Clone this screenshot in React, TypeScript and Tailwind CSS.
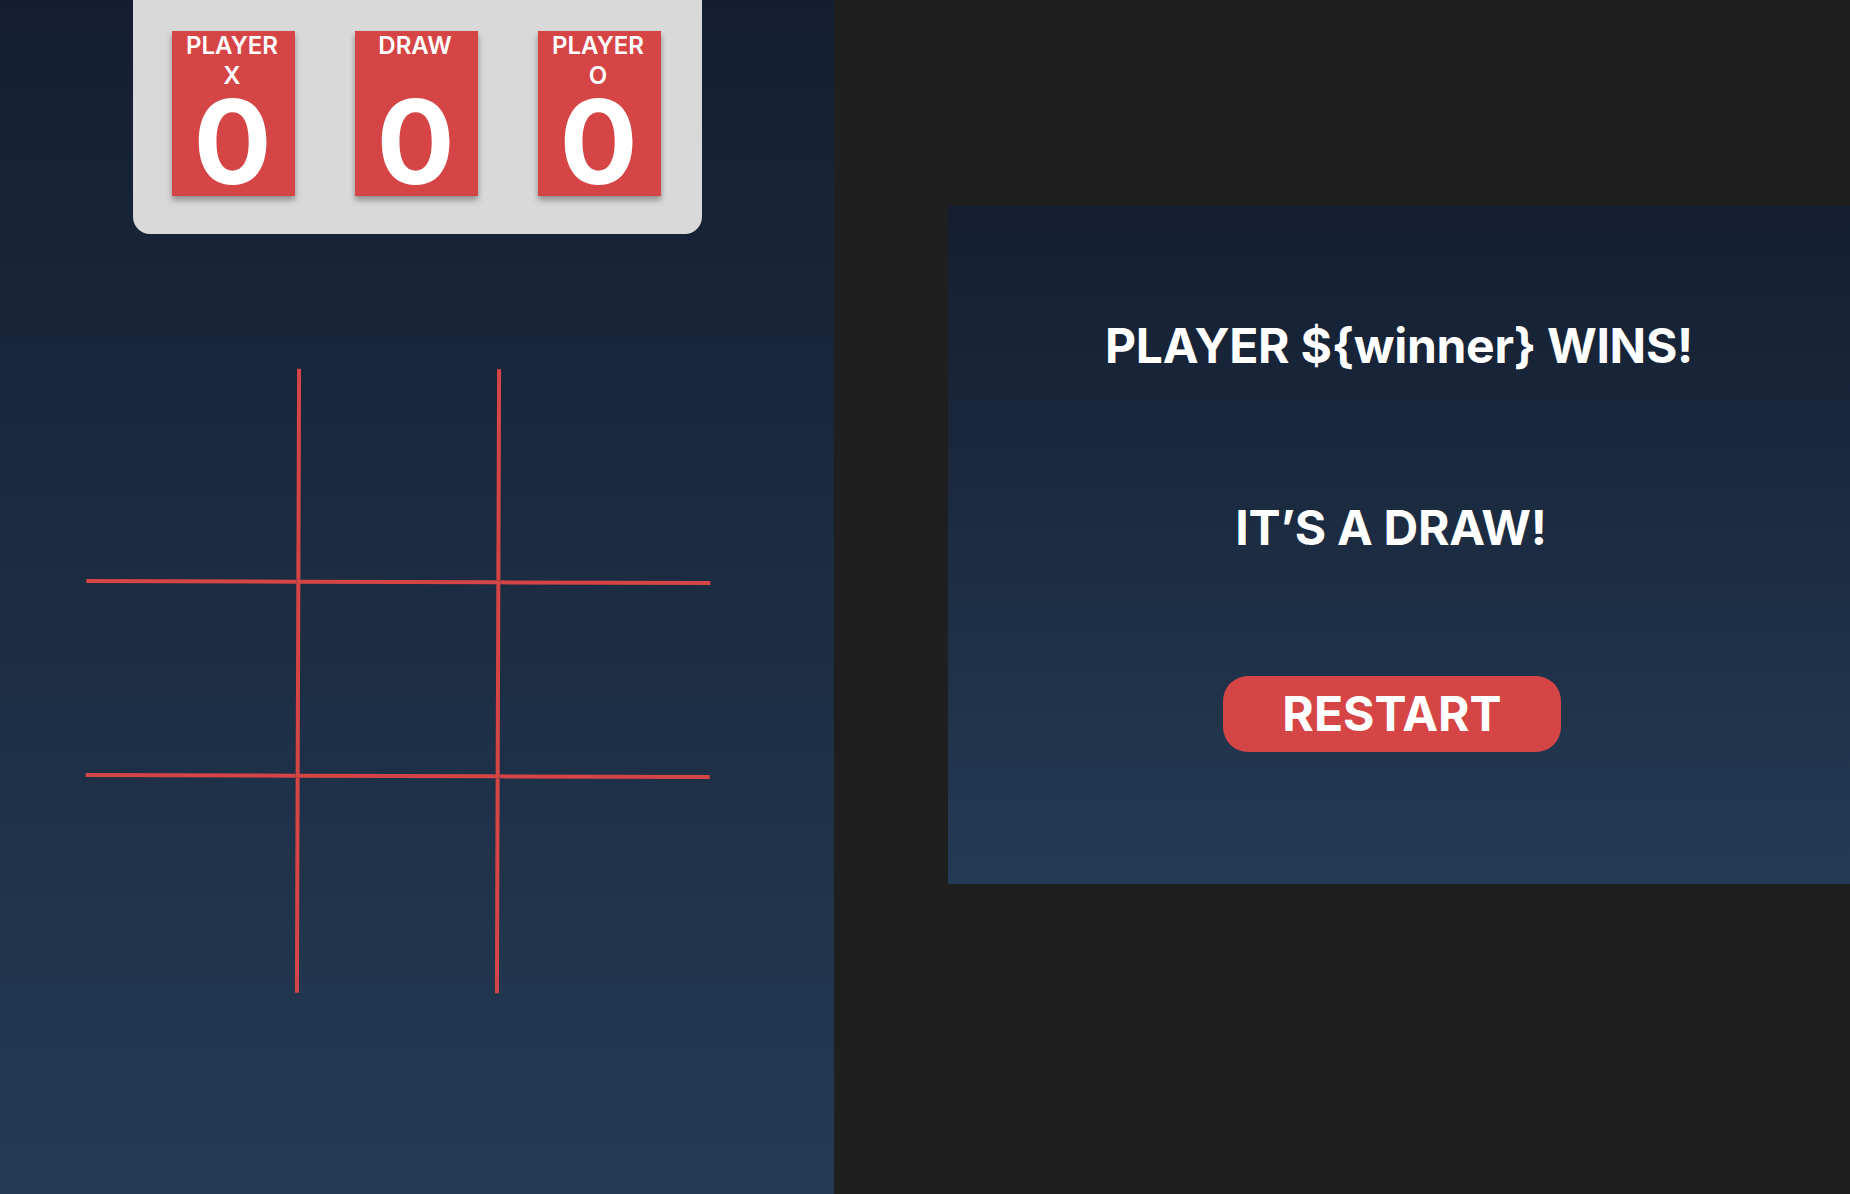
import React from 'react';

const scores = [
  { id: 'x', label: ['PLAYER', 'X'], value: 0 },
  { id: 'draw', label: ['DRAW'], value: 0 },
  { id: 'o', label: ['PLAYER', 'O'], value: 0 },
];

function ScoreCard({ label, value }: { label: string[]; value: number }) {
  return (
    <div className="w-[123px] h-[165px] bg-[#d64545] shadow-[0_4px_6px_rgba(0,0,0,0.35)] flex flex-col items-center justify-between pb-[10px] text-white">
      <div className="text-2xl leading-[30px] font-semibold text-center pr-[3px]">
        {label.map((line) => (
          <span key={line} className="block">{line}</span>
        ))}
      </div>
      <div className="text-[116px] leading-[88px] font-bold pr-[2px]">{value}</div>
    </div>
  );
}

function Board() {
  const cells = Array.from({ length: 9 }, (_, i) => i);
  return (
    <div className="ml-[86px] mt-[135px] w-[624px] h-[624px] grid grid-cols-[210px_204px_210px] grid-rows-[211px_198px_215px] rotate-[0.2deg]">
      {cells.map((i) => {
        const col = i % 3;
        const row = Math.floor(i / 3);
        return (
          <div
            key={i}
            className={`${col === 1 ? 'border-x-4' : ''} ${row === 1 ? 'border-y-4' : ''} border-[#d64545]`}
          />
        );
      })}
    </div>
  );
}

export default function App() {
  return (
    <div className="flex h-screen w-full overflow-hidden bg-[#1f1f1f] font-['Inter',sans-serif]">
      {/* game side */}
      <div className="w-[834px] h-full shrink-0 bg-linear-to-b from-[#141e30] to-[#243b55] flex flex-col">
        <div className="ml-[133px] w-[569px] h-[234px] bg-[#d9d9d9] rounded-b-[17px] flex pt-[31px] pl-[39px] gap-[60px]">
          {scores.map((s) => (
            <ScoreCard key={s.id} label={s.label} value={s.value} />
          ))}
        </div>
        <Board />
      </div>

      {/* result modal */}
      <div className="flex-1">
        <div className="ml-[114px] mt-[206px] w-[902px] h-[678px] bg-linear-to-b from-[#141e30] to-[#243b55] flex flex-col items-center pt-[116px] text-white">
          <h2 className="text-5xl leading-none font-bold tracking-[-0.3px]">{'PLAYER ${winner} WINS!'}</h2>
          <h2 className="mt-[134px] mr-[16px] text-5xl leading-none font-bold tracking-[-0.3px]">IT’S A DRAW!</h2>
          <button className="mt-[124px] mr-[14px] bg-[#d64545] rounded-[25px] px-[59px] py-[14px] text-5xl leading-none font-bold text-white">
            RESTART
          </button>
        </div>
      </div>
    </div>
  );
}
